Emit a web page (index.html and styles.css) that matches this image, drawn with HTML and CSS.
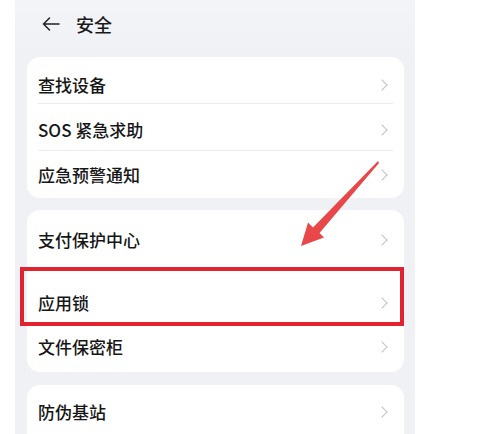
FILE: index.html
```html
<!DOCTYPE html>
<html lang="zh-CN">
<head>
<meta charset="utf-8">
<link rel="stylesheet" href="styles.css">
</head>
<body>
<div class="page">
  <div class="gutter"></div>
  <div class="phone">
    <div class="header">
      <svg class="back" width="18" height="14" viewBox="0 0 18 14"><path d="M17 7H1.5M7.5 1L1.5 7l6 6" fill="none" stroke="#222" stroke-width="1.5" stroke-linecap="round" stroke-linejoin="round"/></svg>
      <span class="title">安全</span>
    </div>
    <div class="card">
      <div class="row r1"><span>查找设备</span><i class="chev"></i></div>
      <div class="row r2"><span>SOS 紧急求助</span><i class="chev"></i></div>
      <div class="row r3 last"><span>应急预警通知</span><i class="chev"></i></div>
    </div>
    <div class="card card2">
      <div class="row p1 last"><span>支付保护中心</span><i class="chev"></i></div>
      <div class="row p2 last"><span>应用锁</span><i class="chev"></i></div>
      <div class="row p3 last"><span>文件保密柜</span><i class="chev"></i></div>
      <div class="redbox"></div>
    </div>
    <div class="card card3">
      <div class="row q1 last"><span>防伪基站</span><i class="chev"></i></div>
    </div>
  </div>
  <div class="side"></div>
  <svg class="arrow" width="488" height="434" viewBox="0 0 488 434"><polygon points="378,161 379,163 319.5,233 324,237.5 301,246 308,222.5 313,227.5" fill="#e8484a"/></svg>
</div>
</body>
</html>
```
FILE: styles.css
```css
html, body { margin: 0; padding: 0; background: #fff; }
body { font-family: "Noto Sans CJK SC", "Noto Sans", sans-serif; color: #161616; }
.page { position: relative; width: 488px; height: 434px; display: flex; overflow: hidden; }
.gutter { width: 15px; flex: none; background: #fff; }
.side { flex: 1; background: #fff; }
.phone { width: 400px; flex: none; background: linear-gradient(#f3f4f8, #f0f1f5 60px, #f0f1f5); padding: 0 11px 0 12px; box-sizing: border-box; display: flex; flex-direction: column; }
.header { height: 57px; display: flex; align-items: center; padding-left: 15px; box-sizing: border-box; padding-bottom: 10px; }
.back { display: block; margin-right: 16px; }
.title { font-size: 18px; line-height: 20px; font-weight: 500; color: #1a1a1a; }
.card { background: #fff; border-radius: 13px; margin-bottom: 12px; flex: none; position: relative; }
.card2 { margin-bottom: 13px; }
.card3 { border-radius: 13px 13px 0 0; margin-bottom: 0; flex: 1; }
.row { display: flex; align-items: center; justify-content: space-between; padding: 0 15px 0 11px; box-sizing: border-box; position: relative; font-size: 17px; line-height: 20px; font-weight: 500; }
.row::after { content: ""; position: absolute; left: 11px; right: 11px; bottom: 0; height: 1px; background: #ececec; }
.row.last::after { display: none; }
.r1 { height: 47px; padding-top: 8px; }
.r2 { height: 47px; padding-top: 4px; }
.r3 { height: 47px; padding-top: 1px; }
.p1 { height: 57px; padding-top: 2px; }
.p2 { height: 59px; padding-top: 12px; }
.p3 { height: 46px; padding-bottom: 5px; }
.q1 { height: 49px; padding-top: 5px; }
.chev { display: block; width: 7px; height: 7px; border-top: 1.4px solid #c2c2c2; border-right: 1.4px solid #c2c2c2; transform: rotate(45deg); margin-right: 3px; }
.redbox { position: absolute; left: -7px; right: 0; top: 57px; height: 59px; border: 4.5px solid #e0232e; box-sizing: border-box; }
.arrow { position: absolute; left: 0; top: 0; pointer-events: none; }
```
